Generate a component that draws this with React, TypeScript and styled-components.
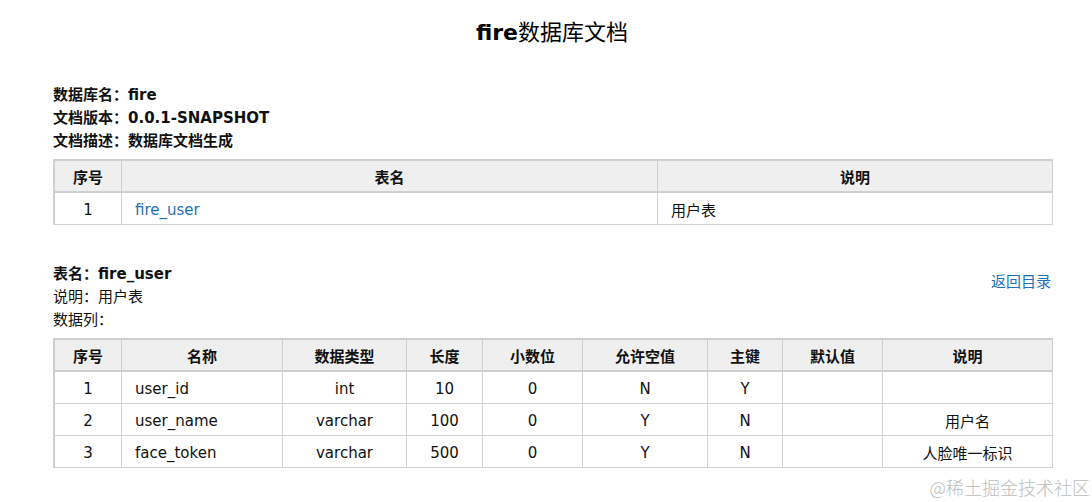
import * as React from 'react';
import styled, { createGlobalStyle } from 'styled-components';

const GlobalStyle = createGlobalStyle`
  html, body {
    margin: 0;
    padding: 0;
    background: #fff;
  }
  body {
    font-family: "DejaVu Sans", "Noto Sans CJK SC", sans-serif;
    font-size: 15px;
    color: #111;
  }
`;

const Page = styled.div`
  position: relative;
  width: 998px;
  height: 502px;
  padding: 0 41px 0 53px;
  overflow: hidden;
`;

const Title = styled.h1`
  margin: 0;
  padding-top: 18px;
  height: 30px;
  line-height: 30px;
  font-size: 22px;
  font-weight: bold;
  text-align: center;
  color: #000;

  span {
    font-weight: normal;
  }
`;

const Meta = styled.div`
  margin-top: 36px;
`;

const Line = styled.div<{ $bold?: boolean }>`
  height: 23px;
  line-height: 23px;
  font-weight: ${p => (p.$bold ? 'bold' : 'normal')};
  color: #111;
`;

const Table = styled.table<{ $gap: number }>`
  width: 998px;
  margin-top: ${p => p.$gap}px;
  border-collapse: separate;
  border-spacing: 0;
  table-layout: fixed;
  border-top: 2px solid #cfcfcf;
  border-left: 2px solid #cfcfcf;
`;

const Th = styled.th`
  height: 29px;
  padding: 1px 0 0;
  background: #efefef;
  font-weight: bold;
  text-align: center;
  border-right: 1px solid #cfcfcf;
  border-bottom: 2px solid #cfcfcf;
`;

const Td = styled.td<{ $align?: 'left' | 'center' }>`
  height: 29px;
  padding: 2px 13px 0;
  text-align: ${p => p.$align || 'center'};
  border-right: 1px solid #d2d2d2;
  border-bottom: 1px solid #d2d2d2;
  white-space: nowrap;
`;

const TableLink = styled.a`
  color: #1f6fb5;
  text-decoration: none;
`;

const SectionHead = styled.div`
  display: flex;
  justify-content: space-between;
  margin-top: 38px;
`;

const BackLink = styled.a`
  margin-top: 8px;
  height: 23px;
  line-height: 23px;
  color: #1f6fb5;
  text-decoration: none;
`;

const Watermark = styled.div`
  position: absolute;
  right: 2px;
  bottom: 2px;
  font-family: "Noto Sans CJK SC", serif;
  font-size: 18px;
  font-weight: 300;
  color: #bdbdbd;
`;

const columns = [
  { w: 67, t: '序号' },
  { w: 161, t: '名称' },
  { w: 124, t: '数据类型' },
  { w: 76, t: '长度' },
  { w: 100, t: '小数位' },
  { w: 125, t: '允许空值' },
  { w: 75, t: '主键' },
  { w: 100, t: '默认值' },
  { w: 170, t: '说明' },
];

const rows = [
  ['1', 'user_id', 'int', '10', '0', 'N', 'Y', '', ''],
  ['2', 'user_name', 'varchar', '100', '0', 'Y', 'N', '', '用户名'],
  ['3', 'face_token', 'varchar', '500', '0', 'Y', 'N', '', '人脸唯一标识'],
];

const App: React.FC = () => (
  <Page>
    <GlobalStyle />
    <Title>fire<span>数据库文档</span></Title>

    <Meta>
      <Line $bold>数据库名：fire</Line>
      <Line $bold>文档版本：0.0.1-SNAPSHOT</Line>
      <Line $bold>文档描述：数据库文档生成</Line>
    </Meta>

    <Table $gap={6}>
      <colgroup>
        <col style={{ width: 67 }} />
        <col style={{ width: 536 }} />
        <col style={{ width: 395 }} />
      </colgroup>
      <thead>
        <tr>
          <Th>序号</Th>
          <Th>表名</Th>
          <Th>说明</Th>
        </tr>
      </thead>
      <tbody>
        <tr>
          <Td>1</Td>
          <Td $align="left"><TableLink href="#fire_user">fire_user</TableLink></Td>
          <Td $align="left">用户表</Td>
        </tr>
      </tbody>
    </Table>

    <SectionHead>
      <div>
        <Line $bold>表名：fire_user</Line>
        <Line>说明：用户表</Line>
        <Line>数据列：</Line>
      </div>
      <BackLink href="#top">返回目录</BackLink>
    </SectionHead>

    <Table $gap={6}>
      <colgroup>
        {columns.map(c => (
          <col key={c.t} style={{ width: c.w }} />
        ))}
      </colgroup>
      <thead>
        <tr>
          {columns.map(c => (
            <Th key={c.t}>{c.t}</Th>
          ))}
        </tr>
      </thead>
      <tbody>
        {rows.map(r => (
          <tr key={r[0]}>
            {r.map((v, i) => (
              <Td key={i} $align={i === 1 ? 'left' : 'center'}>{v}</Td>
            ))}
          </tr>
        ))}
      </tbody>
    </Table>

    <Watermark>@稀土掘金技术社区</Watermark>
  </Page>
);

export default App;
